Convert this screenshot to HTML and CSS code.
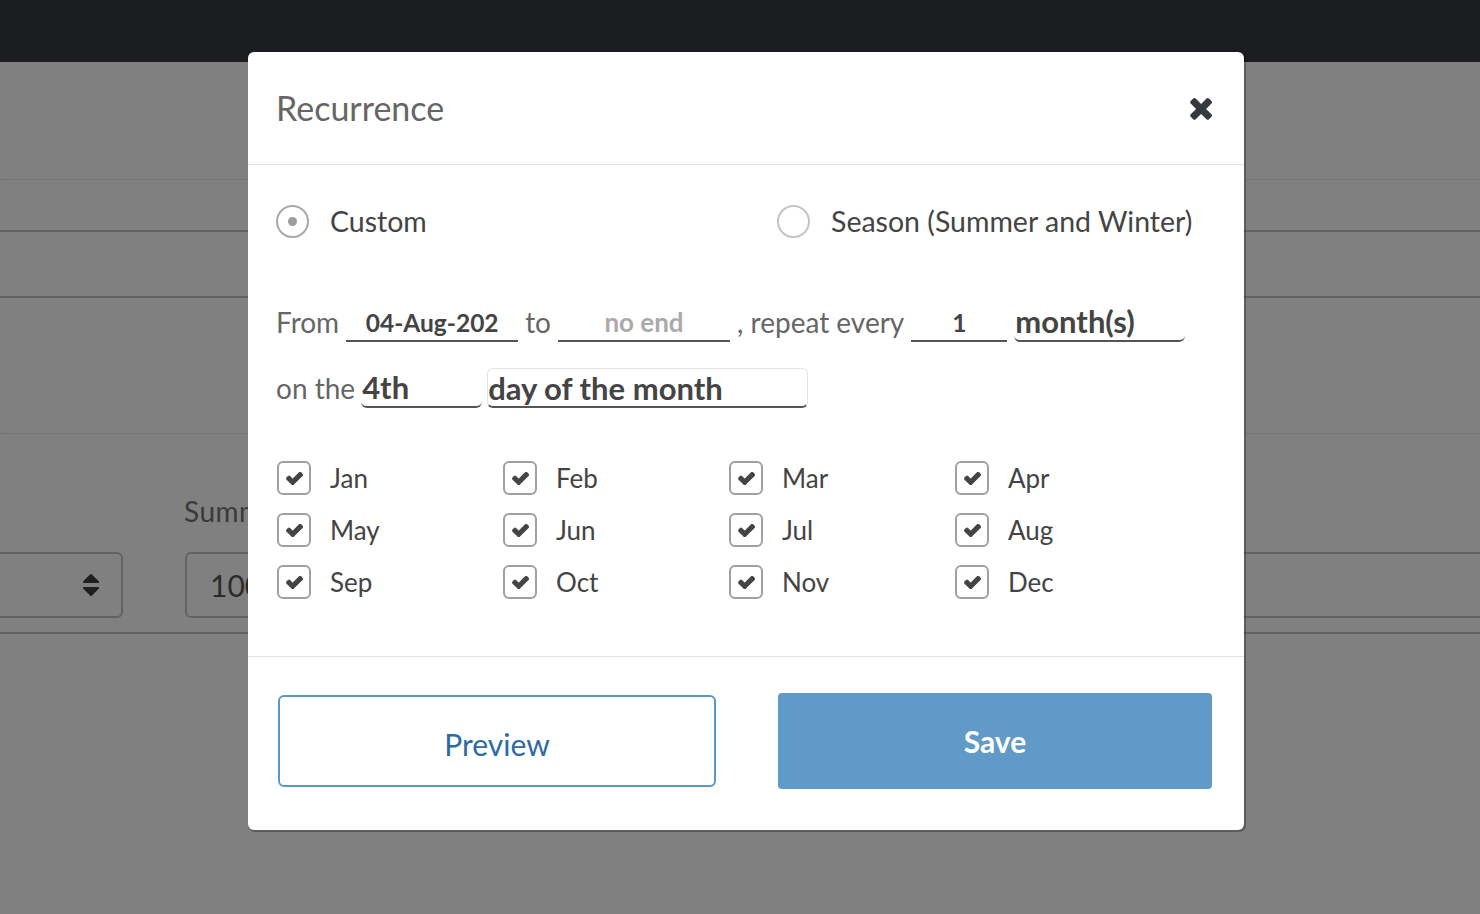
FILE: index.html
```html
<!DOCTYPE html>
<html lang="en">
<head>
<meta charset="utf-8">
<title>Recurrence</title>
<link rel="stylesheet" href="styles.css">
</head>
<body>
<div class="page">
  <div class="topbar"></div>
  <div class="bg">
    <div class="bg-row r1"></div>
    <div class="bg-row r2"></div>
    <div class="bg-row r3"></div>
    <div class="bg-row r4"></div>
    <div class="bg-form">
      <div class="bg-label">Summer</div>
      <div class="bg-fields">
        <div class="bg-select">
          <svg class="sort-icon" viewBox="0 192 1024 1408" width="16" height="22"><path fill="#1f1f1f" d="M1024 1088q0 26-19 45l-448 448q-19 19-45 19t-45-19l-448-448q-19-19-19-45t19-45 45-19h896q26 0 45 19t19 45zm0-384q0 26-19 45t-45 19h-896q-26 0-45-19t-19-45 19-45l448-448q19-19 45-19t45 19l448 448q19 19 19 45z"/></svg>
        </div>
        <div class="bg-input">100</div>
      </div>
      <div class="bg-line"></div>
    </div>
  </div>

  <div class="modal">
    <div class="modal-header">
      <h2 class="modal-title">Recurrence</h2>
      <button class="close-btn" aria-label="Close">
        <svg viewBox="182 266 1308 1288" width="24" height="24"><path fill="#363a3f" d="M1490 1322q0 40-28 68l-136 136q-28 28-68 28t-68-28l-294-294-294 294q-28 28-68 28t-68-28l-136-136q-28-28-28-68t28-68l294-294-294-294q-28-28-28-68t28-68l136-136q28-28 68-28t68 28l294 294 294-294q28-28 68-28t68 28l136 136q28 28 28 68t-28 68l-294 294 294 294q28 28 28 68z"/></svg>
      </button>
    </div>

    <div class="modal-body">
      <div class="radio-row">
        <label class="radio"><span class="radio-circle checked"></span><span class="radio-text">Custom</span></label>
        <label class="radio"><span class="radio-circle"></span><span class="radio-text">Season (Summer and Winter)</span></label>
      </div>

      <div class="line-row">
        <span class="lbl">From</span>
        <input class="field w-date" type="text" value="04-Aug-202">
        <span class="lbl">to</span>
        <input class="field w-date" type="text" placeholder="no end">
        <span class="lbl">, repeat every</span>
        <input class="field w-num" type="text" value="1">
        <select class="sel w-unit"><option>month(s)</option></select>
      </div>

      <div class="line-row row2">
        <span class="lbl">on the</span>
        <select class="sel w-day"><option>4th</option></select>
        <select class="sel boxed w-kind"><option>day of the month</option></select>
      </div>

      <div class="months">
        <label class="chk"><span class="box"><svg viewBox="60 350 1660 1150" width="17" height="13"><path d="M1671 566q0 40-28 68l-724 724-136 136q-28 28-68 28t-68-28l-136-136-362-362q-28-28-28-68t28-68l136-136q28-28 68-28t68 28l294 295 656-657q28-28 68-28t68 28l136 136q28 28 28 68z"/></svg></span>Jan</label>
        <label class="chk"><span class="box"><svg viewBox="60 350 1660 1150" width="17" height="13"><path d="M1671 566q0 40-28 68l-724 724-136 136q-28 28-68 28t-68-28l-136-136-362-362q-28-28-28-68t28-68l136-136q28-28 68-28t68 28l294 295 656-657q28-28 68-28t68 28l136 136q28 28 28 68z"/></svg></span>Feb</label>
        <label class="chk"><span class="box"><svg viewBox="60 350 1660 1150" width="17" height="13"><path d="M1671 566q0 40-28 68l-724 724-136 136q-28 28-68 28t-68-28l-136-136-362-362q-28-28-28-68t28-68l136-136q28-28 68-28t68 28l294 295 656-657q28-28 68-28t68 28l136 136q28 28 28 68z"/></svg></span>Mar</label>
        <label class="chk"><span class="box"><svg viewBox="60 350 1660 1150" width="17" height="13"><path d="M1671 566q0 40-28 68l-724 724-136 136q-28 28-68 28t-68-28l-136-136-362-362q-28-28-28-68t28-68l136-136q28-28 68-28t68 28l294 295 656-657q28-28 68-28t68 28l136 136q28 28 28 68z"/></svg></span>Apr</label>
        <label class="chk"><span class="box"><svg viewBox="60 350 1660 1150" width="17" height="13"><path d="M1671 566q0 40-28 68l-724 724-136 136q-28 28-68 28t-68-28l-136-136-362-362q-28-28-28-68t28-68l136-136q28-28 68-28t68 28l294 295 656-657q28-28 68-28t68 28l136 136q28 28 28 68z"/></svg></span>May</label>
        <label class="chk"><span class="box"><svg viewBox="60 350 1660 1150" width="17" height="13"><path d="M1671 566q0 40-28 68l-724 724-136 136q-28 28-68 28t-68-28l-136-136-362-362q-28-28-28-68t28-68l136-136q28-28 68-28t68 28l294 295 656-657q28-28 68-28t68 28l136 136q28 28 28 68z"/></svg></span>Jun</label>
        <label class="chk"><span class="box"><svg viewBox="60 350 1660 1150" width="17" height="13"><path d="M1671 566q0 40-28 68l-724 724-136 136q-28 28-68 28t-68-28l-136-136-362-362q-28-28-28-68t28-68l136-136q28-28 68-28t68 28l294 295 656-657q28-28 68-28t68 28l136 136q28 28 28 68z"/></svg></span>Jul</label>
        <label class="chk"><span class="box"><svg viewBox="60 350 1660 1150" width="17" height="13"><path d="M1671 566q0 40-28 68l-724 724-136 136q-28 28-68 28t-68-28l-136-136-362-362q-28-28-28-68t28-68l136-136q28-28 68-28t68 28l294 295 656-657q28-28 68-28t68 28l136 136q28 28 28 68z"/></svg></span>Aug</label>
        <label class="chk"><span class="box"><svg viewBox="60 350 1660 1150" width="17" height="13"><path d="M1671 566q0 40-28 68l-724 724-136 136q-28 28-68 28t-68-28l-136-136-362-362q-28-28-28-68t28-68l136-136q28-28 68-28t68 28l294 295 656-657q28-28 68-28t68 28l136 136q28 28 28 68z"/></svg></span>Sep</label>
        <label class="chk"><span class="box"><svg viewBox="60 350 1660 1150" width="17" height="13"><path d="M1671 566q0 40-28 68l-724 724-136 136q-28 28-68 28t-68-28l-136-136-362-362q-28-28-28-68t28-68l136-136q28-28 68-28t68 28l294 295 656-657q28-28 68-28t68 28l136 136q28 28 28 68z"/></svg></span>Oct</label>
        <label class="chk"><span class="box"><svg viewBox="60 350 1660 1150" width="17" height="13"><path d="M1671 566q0 40-28 68l-724 724-136 136q-28 28-68 28t-68-28l-136-136-362-362q-28-28-28-68t28-68l136-136q28-28 68-28t68 28l294 295 656-657q28-28 68-28t68 28l136 136q28 28 28 68z"/></svg></span>Nov</label>
        <label class="chk"><span class="box"><svg viewBox="60 350 1660 1150" width="17" height="13"><path d="M1671 566q0 40-28 68l-724 724-136 136q-28 28-68 28t-68-28l-136-136-362-362q-28-28-28-68t28-68l136-136q28-28 68-28t68 28l294 295 656-657q28-28 68-28t68 28l136 136q28 28 28 68z"/></svg></span>Dec</label>
      </div>
    </div>

    <div class="modal-footer">
      <button class="btn btn-outline">Preview</button>
      <button class="btn btn-primary">Save</button>
    </div>
  </div>
</div>
</body>
</html>
```

FILE: styles.css
```css
* { box-sizing: border-box; }

html, body {
  margin: 0;
  padding: 0;
}

body {
  width: 1480px;
  height: 914px;
  overflow: hidden;
  background: #808080;
  font-family: "Lato", "Open Sans", sans-serif;
  color: #444;
}

.page {
  position: relative;
  width: 1480px;
  height: 914px;
}

.topbar {
  height: 62px;
  background: #1c1d21;
}

/* dimmed background page */
.bg-row { border-bottom: 2px solid #626262; }
.r1 { height: 118px; border-bottom: 1px dotted #6b6b6b; }
.r2 { height: 52px; }
.r3 { height: 66px; }
.r4 { height: 136px; border-bottom: 1px dotted #6b6b6b; }

.bg-form { padding-top: 57px; }

.bg-label {
  height: 40px;
  line-height: 40px;
  padding-left: 184px;
  font-size: 28px;
  color: #3a3a3a;
  letter-spacing: 0.5px;
}

.bg-fields {
  display: flex;
  gap: 62px;
  margin-top: 21px;
  margin-left: -20px;
}

.bg-select {
  width: 143px;
  height: 66px;
  border: 2px solid #626262;
  border-radius: 6px;
  display: flex;
  align-items: center;
  justify-content: flex-end;
  padding-right: 22px;
}

.bg-input {
  flex: 1;
  height: 66px;
  margin-right: -40px;
  border: 2px solid #626262;
  border-radius: 6px;
  padding-left: 23px;
  line-height: 62px;
  font-size: 30px;
  color: #2b2b2b;
}

.bg-line {
  margin-top: 14px;
  border-top: 2px solid #626262;
}

/* modal */
.modal {
  position: absolute;
  left: 248px;
  top: 52px;
  width: 996px;
  height: 778px;
  background: #fff;
  border-radius: 6px;
  box-shadow: 1px 1px 0 1px rgba(0, 0, 0, 0.28);
  display: flex;
  flex-direction: column;
}

.modal-header {
  height: 113px;
  padding: 0 31px 0 28px;
  display: flex;
  align-items: center;
  justify-content: space-between;
  border-bottom: 1px solid #dfe3e7;
}

.modal-title {
  margin: 0;
  font-size: 34px;
  font-weight: 400;
  color: #666;
  position: relative;
  top: -1px;
}

.close-btn {
  border: 0;
  background: none;
  padding: 0;
  width: 24px;
  height: 24px;
  display: flex;
  margin-right: 1px;
}

.modal-body {
  padding: 28px 28px 0 28px;
  height: 492px;
  border-bottom: 1px solid #dfe3e7;
}

.radio-row {
  display: grid;
  grid-template-columns: 501px auto;
  height: 56px;
  align-items: center;
}

.radio {
  display: flex;
  align-items: center;
  gap: 21px;
  font-size: 28.5px;
  color: #444;
}

.radio-circle {
  width: 33px;
  height: 33px;
  border: 2px solid #c4c4c4;
  border-radius: 50%;
  display: flex;
  align-items: center;
  justify-content: center;
}

.radio-circle.checked { border-color: #a9a9a9; }
.radio-circle.checked::after {
  content: "";
  width: 9px;
  height: 9px;
  border-radius: 50%;
  background: #9c9c9c;
}

.line-row {
  display: flex;
  align-items: flex-end;
  gap: 7px;
  height: 40px;
  margin-top: 53px;
}

.row2 { margin-top: 26px; }

.lbl {
  font-size: 28px;
  color: #666;
  line-height: 40px;
  height: 40px;
}

.field {
  height: 40px;
  border: 0;
  border-bottom: 2px solid #555;
  border-radius: 0;
  padding: 2px 0 0 0;
  font-family: inherit;
  font-size: 24.5px;
  font-weight: 700;
  color: #444;
  text-align: center;
  outline: none;
  background: transparent;
}

.field::placeholder { color: #aaa; font-weight: 700; font-size: 26px; }

.w-date { width: 172px; }
.w-num { width: 96px; }

.sel {
  appearance: none;
  -webkit-appearance: none;
  height: 40px;
  border: 0;
  border-bottom: 2px solid #555;
  border-radius: 0 0 6px 6px;
  padding: 0 0 1px 1px;
  font-family: inherit;
  font-size: 31px;
  font-weight: 700;
  color: #444;
  background: transparent;
  outline: none;
}

.sel.boxed {
  border: 1px solid #e4e4e4;
  border-bottom: 2px solid #555;
  border-radius: 6px;
  padding-left: 0;
}

.w-unit { width: 171px; }
.w-day { width: 121px; margin-left: -1px; margin-right: -2px; }
.w-kind { width: 321px; }

.months {
  margin-top: 53px;
  display: grid;
  grid-template-columns: repeat(4, 226px);
  grid-auto-rows: 52px;
}

.chk {
  display: flex;
  align-items: flex-start;
  gap: 19px;
  font-size: 26px;
  line-height: 34px;
  height: 34px;
  color: #444;
  padding-left: 1px;
}

.box {
  width: 34px;
  height: 34px;
  border: 2px solid #a0a0a0;
  border-radius: 6px;
  display: flex;
  align-items: center;
  justify-content: center;
}

.box svg { fill: #444; }
.box svg path {
  stroke: #444;
  stroke-width: 110px;
  stroke-linejoin: round;
}

.modal-footer {
  flex: 1;
  display: grid;
  grid-template-columns: 438px 434px;
  column-gap: 62px;
  align-items: center;
  padding: 0 32px 6px 30px;
}

.btn {
  font-family: inherit;
  font-size: 30px;
  cursor: pointer;
}

.btn-outline {
  height: 92px;
  background: #fff;
  border: 2px solid #5d97c6;
  border-radius: 6px;
  color: #2e6aa4;
  padding-top: 8px;
}

.btn-primary {
  height: 96px;
  background: #5f9ac8;
  border: 0;
  border-radius: 4px;
  color: #fff;
  font-weight: 700;
  padding-top: 2px;
}
```
